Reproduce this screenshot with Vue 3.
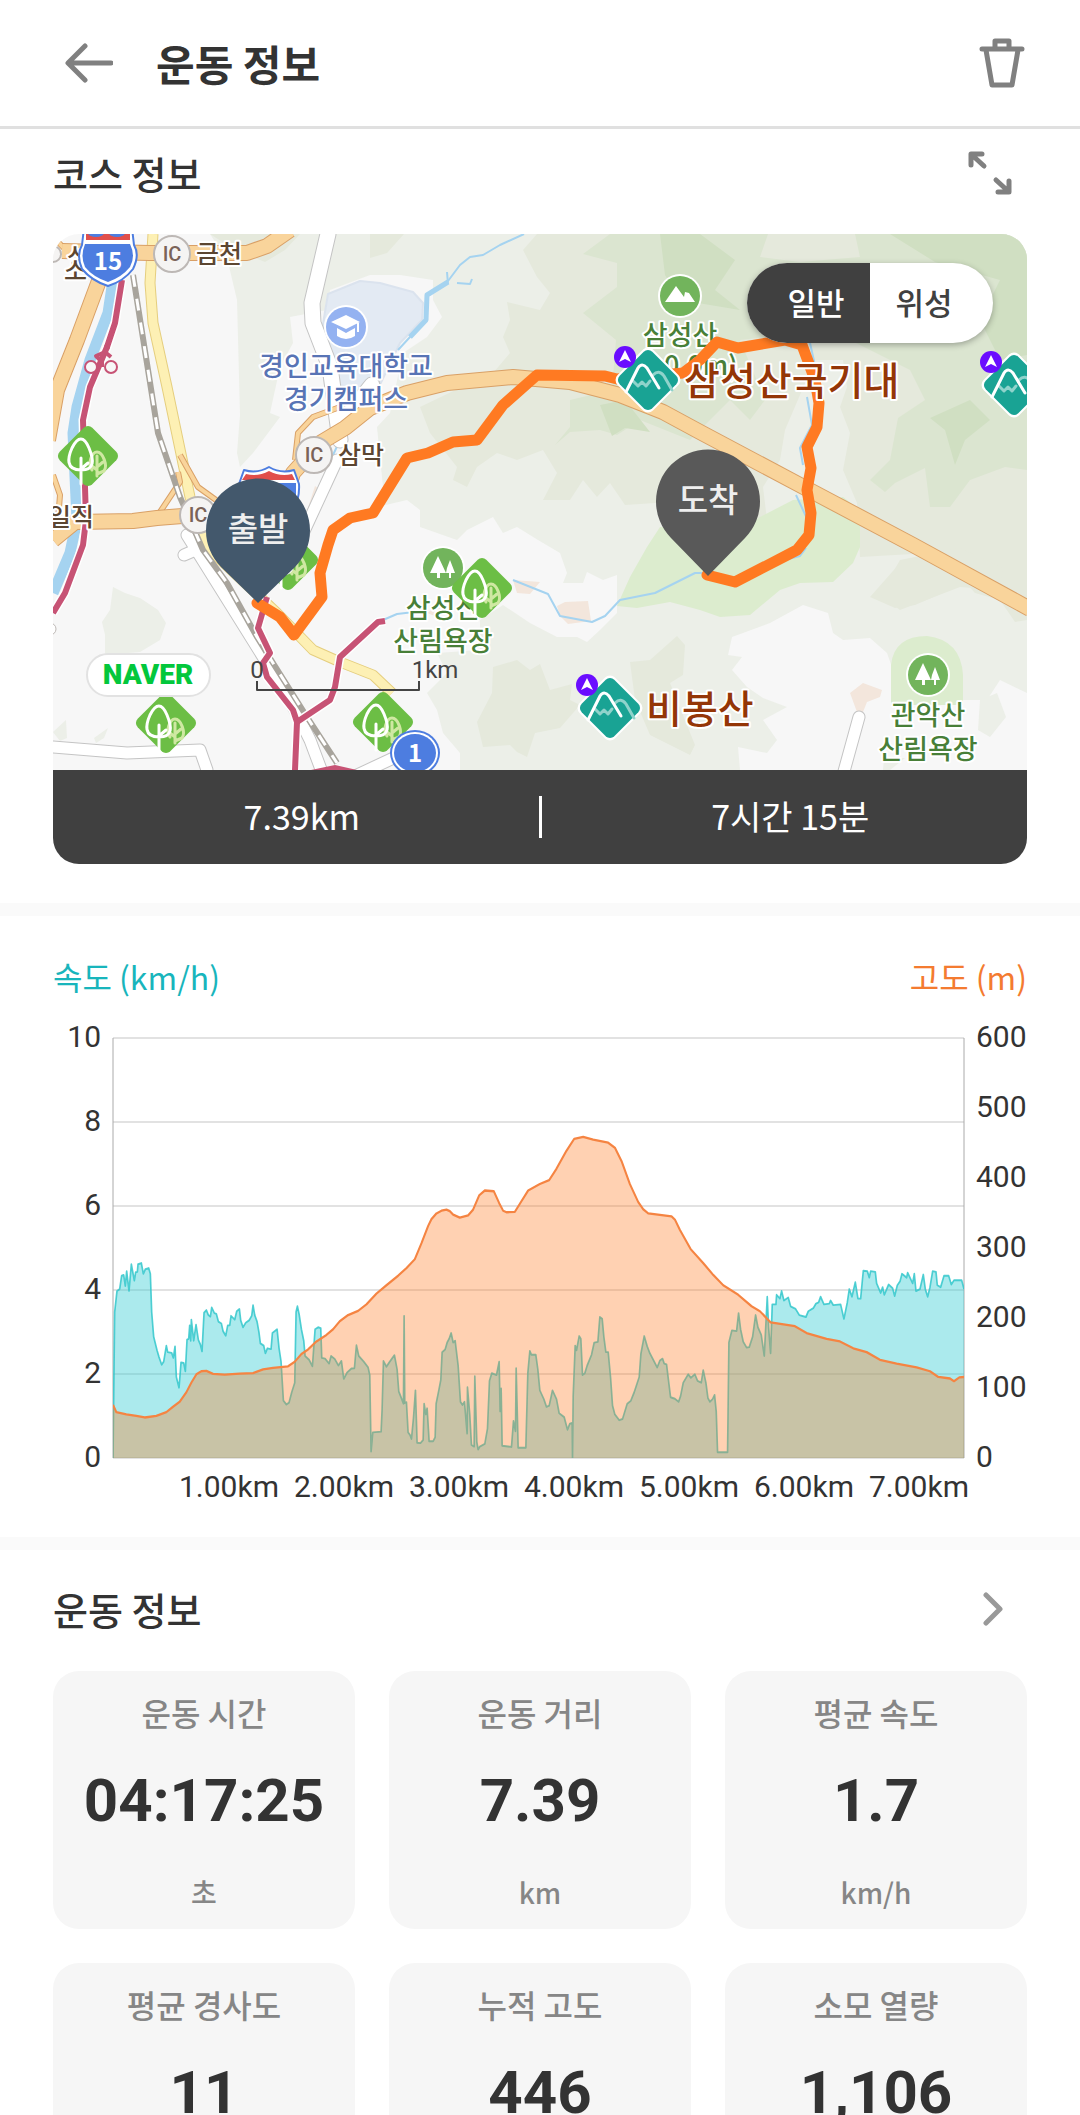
<script setup>
import { ref } from 'vue'

const mapType = ref('normal')

const speedParts = [
  [0, '220,1382 225,1000 232,945 240,940 246,905 252,903 257,932 261,893 268,945 275,875 284,918 288,896 293,895 295,875 305,872 311,900 317,888 327,885 332,900 336,1000 342,1065 352,1100 358,1118 366,1138 372,1130 380,1088 384,1105 396,1107 401,1120 406,1090 410,1170 418,1198 424,1132 432,1133 437,1155 442,1072 447,1070 450,1035 453,1075 455,1020 462,1075 469,1033 476,1073 482,1085 487,1103 493,1002 500,995 506,1008 512,1012 516,988 524,1003 530,1005 536,1025 545,1030 550,1050 558,1062 564,1035 570,1035 574,1010 585,1020 591,998 599,992 603,1022 610,1040 618,1028 628,1022 636,1010 640,982 645,1008 652,1025 658,1055 662,1082 672,1088 677,1108 683,1095 694,1097 698,1055 712,1045 718,1095 724,1130 731,1232 740,1242 748,1237 756,1210 765,1185 769,1000 773,985 778,1005 785,1045 792,1075 796,1115 808,1125 818,1142 826,1045 835,1040 843,1042 846,1120 856,1122 868,1135 874,1115 885,1123 896,1140 905,1128 912,1175 922,1158 935,1148 944,1147 950,1087 957,1115 972,1130 985,1145 990,1165 994,1365 999,1315 1024,1313 1027,1255 1031,1128 1040,1143 1050,1130 1064,1113 1072,1150 1077,1208 1086,1228 1091,1240 1093,1010 1095,1238 1100,1236 1105,1315 1111,1322 1115,1332 1121,1278 1127,1205 1132,1342 1142,1343 1150,1335 1153,1240 1158,1268 1162,1252 1168,1338 1180,1338 1186,1328 1189,1240 1197,1205 1203,1178 1207,1105 1216,1098 1222,1080 1228,1070 1234,1055 1240,1080 1246,1075 1255,1140 1262,1235 1268,1243 1274,1235 1282,1318 1283,1197 1290,1270 1295,1348 1303,1352 1305,1168 1311,1340 1315,1360 1320,1352 1335,1345 1343,1305 1349,1180 1356,1160 1370,1165 1378,1130 1381,1260 1384,1200 1387,1350 1415,1353 1421,1285 1427,1312 1429,1147 1435,1355 1458,1355 1464,1160'],
  [1470, '0,1102 5,1112 18,1112 24,1150 30,1205 42,1228 50,1248 58,1245 68,1205 80,1228 88,1265 103,1275 113,1308 120,1292 127,1290 128,1382 130,1220 136,1088 140,1100 148,1063 153,1070 158,1165 165,1160 172,1140 185,1112 193,1080 204,1078 210,1013 217,1018 222,1065 228,1105 235,1105 242,1170 248,1245 255,1268 268,1283 278,1280 292,1240 303,1232 313,1210 328,1170 333,1110 343,1063 352,1090 360,1108 372,1128 382,1145 390,1127 398,1122 403,1135 410,1137 416,1180 422,1223 435,1227 446,1235 452,1220 460,1185 475,1163 483,1172 495,1163 503,1180 514,1185 520,1152 528,1185 534,1225 540,1235 548,1228 554,1217 559,1260 563,1367 593,1367 597,1080 606,1048 620,1050 626,1003 632,1045 640,1078 650,1093 658,1092 668,1065 677,1008 684,1040 694,1060 703,1115 712,960 716,1040 722,1108 727,980 738,980 740,955 750,965 755,945 762,970 775,962 782,985 797,992 808,1008 828,1013 835,998 850,990 858,978 866,975 872,960 882,980 898,978 902,970 910,982 932,980 942,1018 952,975 958,940 966,960 976,922 984,965 992,965 1000,892 1012,893 1018,910 1022,893 1036,895 1040,925 1052,950 1058,935 1063,955 1076,928 1088,938 1094,958 1102,930 1110,920 1116,900 1130,910 1133,897 1148,925 1153,900 1158,945 1170,940 1180,902 1186,940 1193,960 1200,935 1208,893 1218,895 1222,930 1232,935 1242,905 1256,905 1264,928 1272,917 1295,917 1302,940'],
]
const altitudeParts = [
  [0, '220,1243 230,1262 260,1268 290,1272 315,1276 350,1272 380,1262 400,1248 420,1235 440,1210 455,1185 470,1163 485,1155 500,1154 520,1162 555,1164 600,1161 640,1160 670,1150 700,1146 745,1142 765,1130 785,1110 805,1098 830,1077 860,1060 880,1045 900,1024 925,1008 955,997 980,980 1010,952 1040,930 1075,905 1100,885 1125,862 1145,820 1165,775 1175,757 1190,742 1205,735 1220,732 1230,736 1240,745 1260,753 1285,747 1300,732 1318,695 1335,682 1362,684 1378,715 1390,735 1400,739 1425,738 1445,710 1465,682'],
  [1470, '30,665 58,655 80,625 110,578 133,547 160,542 190,549 235,557 255,570 275,605 300,665 325,712 340,731 355,742 425,750 435,758 450,785 482,835 520,872 550,903 580,930 625,955 665,985 690,998 722,1027 795,1037 830,1055 890,1070 930,1077 970,1095 1010,1105 1050,1125 1100,1135 1160,1145 1200,1155 1225,1170 1260,1174 1272,1181 1288,1171 1302,1170'],
]
const join = (parts) =>
  parts
    .flatMap(([start, list]) =>
      list.split(' ').map((pair) => {
        const [x, y] = pair.split(',').map(Number)
        return `${x + start},${y}`
      }),
    )
    .join(' ')
const area = (line) => `220,1382 ${line} 2772,1382`

const speedLine = join(speedParts)
const altitudeLine = join(altitudeParts)

const speedTicks = [10, 8, 6, 4, 2, 0]
const altitudeTicks = [600, 500, 400, 300, 200, 100, 0]
const distanceTicks = ['1.00km', '2.00km', '3.00km', '4.00km', '5.00km', '6.00km', '7.00km']

const forests = [[88, 456], [288, 560], [166, 723], [482, 588], [383, 722]]
const peaks = [[648, 380], [1014, 385], [610, 708]]
const interchanges = [[172, 254], [314, 455], [198, 515]]

const stats = [
  { label: '운동 시간', value: '04:17:25', unit: '초' },
  { label: '운동 거리', value: '7.39', unit: 'km' },
  { label: '평균 속도', value: '1.7', unit: 'km/h' },
  { label: '평균 경사도', value: '11' },
  { label: '누적 고도', value: '446' },
  { label: '소모 열량', value: '1,106' },
]
</script>

<template>
  <div class="screen">
    <header class="topbar">
      <button class="icon-btn back" type="button" aria-label="뒤로">
        <svg width="48" height="40" viewBox="0 0 48 40"><path d="M20 3 L3 20 L20 37 M4 20 H46" /></svg>
      </button>
      <h1>운동 정보</h1>
      <button class="icon-btn" type="button" aria-label="삭제">
        <svg width="46" height="52" viewBox="0 0 46 52">
          <path d="M3 12 H43 M16 11 V4 H30 V11 M7 13 L13 48 H33 L39 13" />
        </svg>
      </button>
    </header>

    <main>
      <section class="course">
        <div class="section-head">
          <h2>코스 정보</h2>
          <button class="icon-btn expand" type="button" aria-label="지도 확대">
            <svg width="44" height="44" viewBox="0 0 44 44">
              <path d="M3 14 V3 H14 M4 4 L16 15 M30 41 H41 V30 M28 29 L40 40" />
            </svg>
          </button>
        </div>

        <div class="course-card">
          <div class="map">
            <svg class="map-art" viewBox="53 234 974 536">
              <defs>
                <g id="forest">
                  <rect x="-23" y="-23" width="46" height="46" rx="6" transform="rotate(45)" fill="#6cbe45" />
                  <g fill="none" stroke-linecap="round" stroke-linejoin="round">
                    <path d="M9 20 V0 M9 11 L15 6 M9 14 L4 10 M4 14 C-1 8 4 -4 9 -4 C15 -4 20 10 16 15 L9 18" stroke="#cfe8a2" stroke-width="3" />
                    <path d="M-7 28 V2 M-7 13 L0 7 M-7 14 C-23 14 -20 1 -16 -8 C-10 -20 -4 -20 1 -8 C6 4 7 14 -7 14" stroke="#fff" stroke-width="3" />
                  </g>
                </g>
                <g id="peak">
                  <rect x="-25" y="-25" width="50" height="50" rx="7" transform="rotate(45)" fill="#fff" />
                  <rect x="-23" y="-23" width="46" height="46" rx="6" transform="rotate(45)" fill="#19a394" />
                  <g fill="none" stroke-linecap="round" stroke-linejoin="round" stroke-width="3">
                    <path d="M-15 1 L-10 6 L-6 2 L-2 6 L2 1 M5 -5 Q11 -11 16 -4 L24 10" stroke="#8fd3cb" />
                    <path d="M-22 12 L-10 -12 Q-6 -18 -1 -12 L11 8" stroke="#fff" />
                  </g>
                  <circle cx="-23" cy="-23" r="11" fill="#6a0dff" />
                  <path d="M-23 -30 L-17 -18 L-23 -21 L-29 -18 Z" fill="#fff" />
                </g>
                <g id="woods">
                  <circle r="22" fill="#fff" />
                  <circle r="20" fill="#72b45c" />
                  <path d="M-5 -12 L3 5 H-3 V10 H-6 V5 H-13 Z M7 -8 L12 5 H8 V10 H6 V5 H3 L4 0 Z" fill="#fff" />
                </g>
              </defs>

              <rect x="53" y="234" width="974" height="536" fill="#f7f7f7" />
              <path fill="#ecefe8" d="M210 234H1027V770H460L460 753 443 733 437 710 427 693 447 673 437 653 480 650 480 620 503 605 530 623 557 637 577 637 587 642 600 630 617 613 617 575 603 580 587 572 583 583 563 583 567 573 560 553 538 540 517 527 503 533 493 517 467 530 457 540 420 527 420 510 407 500 377 507 383 487 377 427 390 413 403 353 427 337 442 317 433 300 433 280 400 275 370 275 330 290 327 310 290 317 293 343 280 367 270 413 280 417 253 453 240 467 237 453 240 415 237 300 228 262Z" />
              <path fill="#ecefe8" d="M113 587L125 593 140 598 158 610 166 623 160 640 140 652 105 655 105 635 102 622 110 610ZM53 732L66 720 67 738 60 741ZM94 738L108 728 104 738 96 743Z" />
              <path fill="#e5e9dc" d="M210 234H300L285 250 265 262 235 250ZM370 234H404L387 253 370 258ZM537 234H1027V620L1015 622 1000 600 975 593 966 583 915 605 895 608 870 597 900 563 930 553 860 557 857 503 843 470 850 433 840 407 847 387 843 360 815 360 785 430 780 460 763 487 767 520 740 525 700 500 625 505 610 483 597 497 583 480 570 500 543 500 557 473 543 450 517 460 497 453 477 467 467 487 453 480 457 467 430 433 420 407 470 383 493 373 510 353 503 337 510 320 507 302 540 310 550 293 537 277 523 250Z" />
              <path fill="#e5e9dc" d="M517 660L530 670 540 664 550 690 572 684 570 700 580 705 560 728 535 733 527 757 517 752 510 745 483 747 477 722 492 693 493 667ZM630 662L650 660 677 636 685 645 683 675 670 683 695 745 690 755 650 735 635 700ZM880 595L900 560 960 548 1003 568 1000 590 960 587 900 610Z" />
              <path fill="#dbe5d0" d="M610 234H768L760 257 800 262 860 257 855 234H1027V470L1005 467 970 480 950 507 930 507 925 468 895 483 885 492 870 480 890 460 898 418 925 400 910 370 880 355 830 330 740 340 765 400 750 420 730 400 690 440 640 420 617 435 600 430 570 432 555 445 570 427 570 400 612 390 616 340 583 313 617 287 617 263 583 254Z" />
              <path fill="#d0dfc2" d="M660 234H700L735 260 715 290 740 310 680 300 665 275ZM890 234H1027V355L1000 360 980 320 1000 280 935 262ZM600 405L625 400 650 432 625 428 612 436ZM930 418L970 400 990 420 965 440 955 465 945 430Z" />
              <path fill="#f7f7f7" d="M732 637L743 633 770 623 803 605 828 613 833 633 843 640 870 638 887 653 893 670 920 700 987 700 1000 680 1027 693V770H740L738 747 767 753 777 740 763 720 787 707 763 698 747 687 732 670 742 657 728 655Z" />
              <path fill="#ecefe8" d="M980 700L997 693 1006 717 990 737 978 730ZM884 758H905L890 770H883Z" />
              <path fill="#dcecce" d="M793 500L843 497 860 510 860 547 853 563 833 582 800 583 780 590 750 615 720 617 700 610 670 602 637 608 617 606 630 577 647 547 660 527 740 530 760 517ZM891 705V665Q894 636 927 636Q961 640 963 675V705Z" />
              <path fill="#f3e6dc" d="M557 606L565 602 588 601 591 621 568 624 560 616ZM513 580L540 582 530 594 517 593ZM850 693L863 683 882 690 880 697 867 702 863 712 857 712ZM315 486L324 492 316 516 306 514ZM427 613L440 604V618Z" />
              <path fill="#e3eaf3" stroke="#dbe3ee" stroke-width="2" d="M328 294L360 281 380 283 413 292 423 303 422 320 400 343 375 395 340 385 322 330Z" />

              <g class="water">
                <path d="M113 280L108 313 90 360 77 407 73 433 77 520 70 553 53 593" stroke-width="11" />
                <path d="M398 350L410 337 426 320 427 295 448 281 460 265 470 257 483 255 500 245 524 234" stroke-width="2" />
                <path d="M410 337L426 320 427 295 448 282" stroke-width="5" />
                <path d="M457 283L470 284 472 279M447 272L448 284" stroke-width="2" />
                <path d="M383 620L397 614 423 611M513 580L548 594 560 616 592 622 605 616 620 600 655 593 695 573 705 573" stroke-width="2" />
                <path d="M810 343L816 370M807 397L812 425 800 448 803 465M796 495L810 525M757 567L800 556 806 548" stroke-width="2" />
                <path d="M340 440L333 455 320 490" stroke-width="2" />
              </g>

              <g class="road-edge">
                <path d="M328 234L312 303 313 323 330 367 340 440M372 385L340 425" stroke-width="17" />
                <path d="M53 747L127 753 200 750 207 770M859 717L843 775M184 555L200 548M187 535L265 660 295 710 310 740 322 772M355 776L400 755M337 460L300 540" stroke-width="13" />
              </g>
              <g class="road-fill">
                <path d="M328 234L312 303 313 323 330 367 340 440M372 385L340 425" stroke-width="15" />
                <path d="M53 747L127 753 200 750 207 770M859 717L843 775M184 555L200 548M187 535L265 660 295 710 310 740 322 772M355 776L400 755M337 460L300 540" stroke-width="11" />
              </g>
              <path class="local-edge" d="M153 234L150 283 153 323 167 387 190 497 207 547 277 613 313 650 340 662 373 675 392 693" />
              <path class="local" d="M153 234L150 283 153 323 167 387 190 497 207 547 277 613 313 650 340 662 373 675 392 693" />
              <path class="ramp-edge" d="M160 512L180 482 178 472M180 455L198 487 216 500M295 460L298 433 313 417 340 407M53 475L60 495 58 520M53 237L65 249" />
              <path class="ramp" d="M160 512L180 482 178 472M180 455L198 487 216 500M295 460L298 433 313 417 340 407M53 475L60 495 58 520M53 237L65 249" />
              <g class="highway-edge">
                <path d="M62 251L150 253 247 253 267 246 290 230M103 270L77 340 57 390 48 440M53 540L75 522 133 521 157 518 195 515M285 500L293 473 320 443 345 428 370 408 407 393 447 383 513 377 570 382 620 395 663 412 700 432 813 492 913 545 1030 609" />
              </g>
              <g class="highway">
                <path d="M62 251L150 253 247 253 267 246 290 230M103 270L77 340 57 390 48 440M53 540L75 522 133 521 157 518 195 515M285 500L293 473 320 443 345 428 370 408 407 393 447 383 513 377 570 382 620 395 663 412 700 432 813 492 913 545 1030 609" />
              </g>
              <path class="rail" d="M133 275L158 433 180 497 203 550 227 583 257 637 273 663 307 717 337 763" />
              <path class="rail-dash" d="M133 275L158 433 180 497 203 550 227 583 257 637 273 663 307 717 337 763" />
              <g class="bike-edge">
                <path d="M122 280L115 323 107 347 90 387 83 420 86 520 83 545 65 593 53 613M267 597L258 628 270 653 263 663 267 677 293 710 297 722 295 770M297 722L330 700 335 687 340 657 378 622 385 621" />
              </g>
              <g class="bike">
                <path d="M122 280L115 323 107 347 90 387 83 420 86 520 83 545 65 593 53 613M267 597L258 628 270 653 263 663 267 677 293 710 297 722 295 770M297 722L330 700 335 687 340 657 378 622 385 621" />
              </g>
              <path d="M311 770L335 765 357 770Z" fill="#c75375" />
              <g fill="none" stroke="#c75375" stroke-width="2">
                <circle cx="91" cy="367" r="6" fill="#f7f7f7" />
                <circle cx="111" cy="367" r="6" fill="#f7f7f7" />
                <path d="M105 352L96 356 102 362V367M105 352L111 357" stroke-width="4" />
                <circle cx="107" cy="347" r="2" fill="#c75375" />
              </g>

              <g class="place brown" font-size="25">
                <text x="67" y="266">성</text>
                <text x="64" y="280">소</text>
                <text x="196" y="263">금천</text>
                <text x="338" y="464">삼막</text>
                <text x="48" y="526">일직</text>
              </g>
              <g v-for="([x, y], i) in interchanges" :key="i">
                <circle :cx="x" :cy="y" r="18" fill="#f5f4f3" stroke="#bdb8b5" stroke-width="2" />
                <text class="ic" :x="x" :y="y + 7">IC</text>
              </g>
              <circle cx="53" cy="254" r="8" fill="#f5f4f3" stroke="#bdb8b5" stroke-width="2" />
              <circle cx="50" cy="629" r="6" fill="#fff" stroke="#bdb8b5" />

              <path d="M84 228H132L134 245Q140 255 133 269Q124 281 108 286Q92 281 82 269Q76 255 82 245Z" fill="#fff" stroke="#4d7de0" stroke-width="2" />
              <path d="M86 240V228H130V240Z" fill="#e14f4b" />
              <path d="M85 244H130Q136 256 130 267Q122 277 108 282Q93 277 85 267Q80 256 85 244Z" fill="#4d7de0" />
              <ellipse cx="96" cy="233" rx="8" ry="4" fill="#4d7de0" />
              <ellipse cx="117" cy="233" rx="8" ry="4" fill="#4d7de0" />
              <text class="route-no" x="108" y="270">15</text>

              <path d="M239 484L244 470Q257 474 269 467Q281 474 294 470L299 484Q300 500 292 510H245Q237 500 239 484Z" fill="#fff" stroke="#4d7de0" stroke-width="2" />
              <path d="M246 474Q258 477 269 471Q280 477 292 474L295 480H242Z" fill="#e14f4b" />
              <path d="M242 483H296V500H242Z" fill="#4d7de0" />

              <g class="place blue" font-size="27" text-anchor="middle">
                <text x="346" y="376">경인교육대학교</text>
                <text x="346" y="409">경기캠퍼스</text>
              </g>
              <circle cx="346" cy="327" r="22" fill="#fff" />
              <circle cx="346" cy="327" r="20" fill="#94b2f1" />
              <path d="M331 322L346 315 360 322 346 329ZM337 328L346 333 355 328V336Q346 342 337 336ZM357 323H359V332H357Z" fill="#fff" />

              <g class="place green" font-size="27" text-anchor="middle">
                <text x="680" y="345">삼성산</text>
                <text x="701" y="375">0.0m)</text>
                <text x="443" y="618">삼성산</text>
                <text x="443" y="651">산림욕장</text>
                <text x="928" y="725">관악산</text>
                <text x="928" y="759">산림욕장</text>
              </g>
              <circle cx="680" cy="296" r="22" fill="#fff" />
              <circle cx="680" cy="296" r="20" fill="#72b45c" />
              <path d="M665 302L676 286 684 297 685 292 689 293 695 302Z" fill="#fff" />
              <use href="#woods" x="443" y="568" />
              <use href="#woods" x="928" y="675" />

              <use v-for="([x, y], i) in forests" :key="i" href="#forest" :x="x" :y="y" />
              <ellipse cx="415" cy="753" rx="25" ry="23" fill="#4d7de0" />
              <ellipse cx="415" cy="753" rx="23" ry="21" fill="#fff" />
              <ellipse cx="415" cy="753" rx="21" ry="19" fill="#4d7de0" />
              <text class="route-no" x="415" y="762">1</text>

              <path class="track" d="M257 603L280 617 294 635 322 597 320 573 328 545 333 530 350 518 373 513 407 458 428 453 453 442 477 440 503 405 537 375 605 376 617 379 683 373 700 360 717 342 738 348 785 340 802 345 815 380 819 403 817 427 807 447 811 468 807 490 811 513 809 535 797 550 735 582 707 575" />
              <use v-for="([x, y], i) in peaks" :key="i" href="#peak" :x="x" :y="y" />
              <g class="place rust" font-size="39">
                <text x="684" y="395">삼성산국기대</text>
                <text x="646" y="723">비봉산</text>
              </g>

              <rect x="87" y="654" width="123" height="42" rx="21" fill="#fff" stroke="#e2e2e2" stroke-width="2" />
              <text class="naver" x="148" y="684">NAVER</text>
              <path d="M257 681V690H419V681" fill="none" stroke="#444" stroke-width="2" />
              <g class="scale">
                <text x="257" y="678">0</text>
                <text x="435" y="678">1km</text>
              </g>

              <path d="M258 603L221 567A52 52 0 1 1 295 567Z" fill="#43586c" />
              <path d="M708 576L671 538A52 52 0 1 1 745 538Z" fill="#595959" />
              <g class="pin-label">
                <text x="258" y="541">출발</text>
                <text x="708" y="512">도착</text>
              </g>
            </svg>

            <div class="map-toggle" role="group" aria-label="지도 종류">
              <button type="button" :class="{ active: mapType === 'normal' }" @click="mapType = 'normal'">일반</button>
              <button type="button" :class="{ active: mapType === 'satellite' }" @click="mapType = 'satellite'">위성</button>
            </div>
          </div>

          <div class="summary">
            <span>7.39km</span>
            <i></i>
            <span>7시간 15분</span>
          </div>
        </div>
      </section>

      <section class="graph">
        <div class="legend">
          <span class="speed">속도 (km/h)</span>
          <span class="altitude">고도 (m)</span>
        </div>
        <svg class="chart" viewBox="53 1000 974 509">
          <g class="grid">
            <path v-for="(t, i) in speedTicks" :key="t" :d="`M113 ${1038 + i * 84}H964`" />
          </g>
          <path class="axis" d="M113 1038V1458M964 1038V1458" />
          <svg x="113" y="1038" width="851" height="420" viewBox="220 283 2552 1099" preserveAspectRatio="none">
            <polygon :points="area(speedLine)" fill="#33ccd4" fill-opacity="0.41" />
            <polyline :points="speedLine" class="speed-line" />
            <polygon :points="area(altitudeLine)" fill="#ff7a22" fill-opacity="0.35" />
            <polyline :points="altitudeLine" class="altitude-line" />
          </svg>
          <g class="ticks">
            <text v-for="(t, i) in speedTicks" :key="t" x="101" :y="1047 + i * 84" text-anchor="end">{{ t }}</text>
            <text v-for="(t, i) in altitudeTicks" :key="t" x="976" :y="1047 + i * 70">{{ t }}</text>
            <text v-for="(t, i) in distanceTicks" :key="t" :x="229 + i * 115" y="1497" text-anchor="middle">{{ t }}</text>
          </g>
        </svg>
      </section>

      <section class="info">
        <div class="section-head">
          <h2>운동 정보</h2>
          <button class="icon-btn more" type="button" aria-label="더보기">
            <svg width="22" height="34" viewBox="0 0 22 34"><path d="M4 3 L18 17 L4 31" /></svg>
          </button>
        </div>
        <ul class="cards">
          <li v-for="s in stats" :key="s.label">
            <span class="label">{{ s.label }}</span>
            <strong>{{ s.value }}</strong>
            <span v-if="s.unit" class="unit">{{ s.unit }}</span>
          </li>
        </ul>
      </section>
    </main>
  </div>
</template>

<style>
body {
  margin: 0;
  background: #fff;
}
</style>

<style scoped>
.screen {
  height: 100vh;
  overflow: hidden;
  background: #fff;
  color: #333;
  font-family: "Noto Sans CJK KR", sans-serif;
}
button {
  border: 0;
  padding: 0;
  background: none;
  font: inherit;
  cursor: pointer;
}
.icon-btn {
  display: flex;
}
.icon-btn path {
  fill: none;
  stroke: #808080;
  stroke-width: 5;
  stroke-linecap: round;
  stroke-linejoin: round;
}
.topbar {
  display: flex;
  align-items: center;
  height: 126px;
  padding: 0 55px 0 65px;
  border-bottom: 3px solid #e0e0e0;
}
.topbar h1 {
  flex: 1;
  margin: 0 0 0 43px;
  font-size: 42px;
  line-height: 60px;
  font-weight: 700;
}
section {
  padding: 0 53px;
}
.section-head {
  display: flex;
  align-items: center;
  justify-content: space-between;
  height: 88px;
  margin-bottom: 17px;
}
h2 {
  margin: 0;
  font-size: 38px;
  line-height: 56px;
  font-weight: 500;
}
.expand {
  margin-right: 15px;
}
.more {
  margin-right: 23px;
}
.more path {
  stroke: #999;
}
.course {
  padding-bottom: 39px;
}
.course-card {
  overflow: hidden;
  border-radius: 26px;
}
.map {
  position: relative;
}
.map-art,
.chart {
  display: block;
  width: 100%;
}
.map-art path {
  stroke-linejoin: round;
}
.water path,
.road-edge path,
.road-fill path,
.local,
.local-edge,
.ramp,
.ramp-edge,
.highway path,
.highway-edge path,
.rail,
.rail-dash,
.bike path,
.bike-edge path,
.track {
  fill: none;
}
.water { stroke: #a5d3f0; }
.road-edge { stroke: #c4c4c4; stroke-linecap: round; }
.road-fill { stroke: #fff; stroke-linecap: round; }
.local-edge { stroke: #e5ce7e; stroke-width: 11; }
.local { stroke: #fdf0b4; stroke-width: 9; }
.ramp-edge { stroke: #d9a066; stroke-width: 6; }
.ramp { stroke: #f9d49b; stroke-width: 4; }
.highway-edge { stroke: #d9a066; stroke-width: 16; }
.highway { stroke: #f9d49b; stroke-width: 14; }
.rail { stroke: #a8a49c; stroke-width: 6; }
.rail-dash { stroke: #fff; stroke-width: 3; stroke-dasharray: 12 12; }
.bike-edge { stroke: #fff; stroke-width: 9; }
.bike { stroke: #c75375; stroke-width: 6; }
.track { stroke: #ff7a22; stroke-width: 11; stroke-linecap: round; }
.place {
  font-weight: 500;
  paint-order: stroke;
  stroke: #fff;
  stroke-width: 4px;
  stroke-linejoin: round;
}
.brown { fill: #5c4631; }
.blue { fill: #5874b5; }
.green { fill: #487f38; }
.rust { fill: #943607; }
.ic {
  font: 500 20px Roboto, sans-serif;
  fill: #7a6358;
  text-anchor: middle;
}
.route-no {
  font-size: 24px;
  font-weight: 700;
  fill: #fff;
  text-anchor: middle;
}
.naver {
  font: 900 28px Roboto, sans-serif;
  fill: #03c73c;
  text-anchor: middle;
}
.scale {
  font: 400 24px Roboto, sans-serif;
  fill: #444;
  text-anchor: middle;
}
.pin-label {
  font-size: 33px;
  font-weight: 500;
  fill: #eee;
  text-anchor: middle;
}
.map-toggle {
  position: absolute;
  top: 29px;
  right: 34px;
  display: flex;
  overflow: hidden;
  border-radius: 40px;
  background: #fff;
  box-shadow: 0 2px 6px rgba(0, 0, 0, 0.3);
}
.map-toggle button {
  width: 123px;
  height: 80px;
  padding: 0 15px 4px 0;
  font-size: 31px;
  font-weight: 500;
  color: #404040;
}
.map-toggle button:first-child {
  padding: 0 0 4px 15px;
}
.map-toggle .active {
  background: #404040;
  color: #fff;
}
.summary {
  display: flex;
  align-items: center;
  height: 94px;
  background: #404040;
  color: #fff;
  font-size: 34px;
}
.summary span {
  flex: 1;
  padding: 0 0 4px 12px;
  text-align: center;
}
.summary i {
  width: 3px;
  height: 42px;
  background: #fff;
}
.graph {
  padding-top: 36px;
  padding-bottom: 28px;
  border-top: 13px solid #fafafa;
  border-bottom: 13px solid #fafafa;
}
.legend {
  display: flex;
  justify-content: space-between;
  font-size: 32px;
  line-height: 48px;
}
.speed { color: #18b5bc; }
.altitude { color: #f47b30; }
.grid path {
  stroke: #e2e2e2;
  stroke-width: 2;
}
.axis {
  stroke: #aaa;
  stroke-width: 1;
}
.speed-line,
.altitude-line {
  fill: none;
  stroke-linejoin: round;
  stroke-width: 5;
}
.speed-line { stroke: #33c7cb; stroke-opacity: 0.85; }
.altitude-line { stroke: #f58442; stroke-width: 6; }
.ticks {
  font: 400 30px Roboto, sans-serif;
  fill: #333;
}
.info {
  padding-top: 15px;
}
.info .section-head {
  margin-bottom: 18px;
}
.cards {
  display: grid;
  grid-template-columns: repeat(3, 1fr);
  gap: 34px;
  margin: 0;
  padding: 0;
  list-style: none;
}
.cards li {
  display: flex;
  flex-direction: column;
  align-items: center;
  box-sizing: border-box;
  min-height: 258px;
  padding-top: 17px;
  border-radius: 26px;
  background: #f6f6f6;
}
.label,
.unit {
  font-size: 32px;
  line-height: 48px;
  font-weight: 500;
  color: #868686;
}
.unit {
  font-size: 28px;
}
strong {
  margin: 23px 0 25px;
  font-family: Roboto, sans-serif;
  font-size: 60px;
  line-height: 84px;
  font-weight: 700;
}
</style>
